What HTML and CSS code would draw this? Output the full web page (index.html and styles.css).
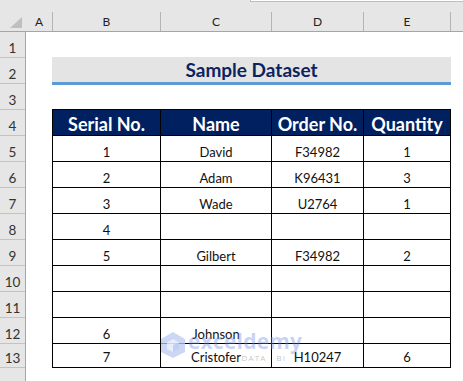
FILE: index.html
```html
<!DOCTYPE html>
<html>
<head>
<meta charset="utf-8">
<link rel="stylesheet" href="styles.css">
</head>
<body>
<div class="app">
  <div class="topstrip"><div class="fx"></div></div>
  <div class="colhdr">
    <div class="corner"><svg width="13" height="12" viewBox="0 0 13 12"><polygon points="12,0 12,11 0,11" fill="#bfbfbf"/></svg></div>
    <div class="ch w-a">A</div>
    <div class="ch w-b">B</div>
    <div class="ch w-c">C</div>
    <div class="ch w-d">D</div>
    <div class="ch w-e">E</div>
  </div>
  <div class="body">
    <div class="rowhdr">
      <div class="rn">1</div>
      <div class="rn">2</div>
      <div class="rn">3</div>
      <div class="rn">4</div>
      <div class="rn">5</div>
      <div class="rn">6</div>
      <div class="rn">7</div>
      <div class="rn">8</div>
      <div class="rn">9</div>
      <div class="rn">10</div>
      <div class="rn">11</div>
      <div class="rn">12</div>
      <div class="rn short">13</div>
      <div class="rn last"></div>
    </div>
    <div class="sheet">
      <div class="sp1"></div>
      <div class="title">Sample Dataset</div>
      <div class="sp3"></div>
      <div class="tbl">
        <div class="h">Serial No.</div><div class="h">Name</div><div class="h">Order No.</div><div class="h">Quantity</div>
        <div>1</div><div>David</div><div>F34982</div><div>1</div>
        <div>2</div><div>Adam</div><div>K96431</div><div>3</div>
        <div>3</div><div>Wade</div><div>U2764</div><div>1</div>
        <div>4</div><div></div><div></div><div></div>
        <div>5</div><div>Gilbert</div><div>F34982</div><div>2</div>
        <div></div><div></div><div></div><div></div>
        <div></div><div></div><div></div><div></div>
        <div>6</div><div>Johnson</div><div></div><div></div>
        <div class="lr">7</div><div class="lr">Cristofer</div><div class="lr">H10247</div><div class="lr">6</div>
      </div>
    </div>
  </div>
  <div class="wm">
    <svg class="wm-logo" width="28" height="28" viewBox="0 0 28 28">
      <polygon points="14,1 26,8 26,21 14,27 2,21 2,8" fill="#b9c9f0" fill-opacity="0.75"/>
      <polygon points="14,8 20,11.5 20,18 14,21 8,18 8,11.5" fill="#ffffff" fill-opacity="0.55"/>
      <polygon points="14,14 20,11.5 20,18 14,21" fill="#a9bcec" fill-opacity="0.6"/>
    </svg>
    <div class="wm-text">
      <div class="wm-name">exceldemy</div>
      <div class="wm-sub">DATA · BI</div>
    </div>
  </div>
</div>
</body>
</html>
```
FILE: styles.css
```css
* { box-sizing: border-box; margin: 0; padding: 0; }
html, body { background: #fff; }
body {
  width: 463px;
  height: 381px;
  overflow: hidden;
  font-family: Lato, "Liberation Sans", sans-serif;
}
.app {
  position: relative;
  width: 463px;
  height: 381px;
  overflow: hidden;
}
.topstrip {
  height: 12px;
  background: #e6e6e6;
  display: flex;
}
.fx {
  margin-left: 250px;
  flex: 1;
  height: 2px;
  background: #fff;
  border-bottom: 1px solid #bdbdbd;
  border-left: 1px solid #bdbdbd;
}
.colhdr {
  display: flex;
  height: 20px;
  background: #e6e6e6;
  border-bottom: 1px solid #a6a6a6;
}
.corner {
  width: 26px;
  position: relative;
}
.corner svg {
  position: absolute;
  left: 10px;
  top: 5px;
}
.ch {
  display: flex;
  align-items: center;
  justify-content: center;
  border-right: 1px solid #b4b4b4;
  font-size: 12px;
  line-height: 16px;
  color: #222;
  padding-top: 1px;
}
.w-a { width: 27px; }
.w-b { width: 108px; }
.w-c { width: 111px; }
.w-d { width: 92px; }
.w-e { width: 87px; }
.body {
  display: flex;
}
.rowhdr {
  width: 26px;
  height: 349px;
  background: #e6e6e6;
  border-right: 1px solid #a6a6a6;
  display: flex;
  flex-direction: column;
}
.rn {
  height: 26px;
  flex: none;
  border-bottom: 1px solid #c3c3c3;
  display: flex;
  align-items: flex-end;
  justify-content: center;
  font-size: 13.5px;
  line-height: 16px;
  padding-bottom: 1px;
  color: #333;
}
.rn.short { height: 24px; }
.rn.last { flex: 1; border-bottom: none; }
.sheet {
  margin-left: 26px;
  display: flex;
  flex-direction: column;
}
.sp1 { height: 25px; }
.sp3 { height: 24px; }
.title {
  width: 399px;
  height: 28px;
  background: #e4e4e4;
  border-bottom: 3px solid #5b9bd5;
  display: flex;
  align-items: flex-end;
  justify-content: center;
  font-weight: 700;
  font-size: 19px;
  line-height: 20px;
  padding-bottom: 2px;
  color: #0b2461;
}
.tbl {
  display: grid;
  grid-template-columns: 107px 110px 91px 86px;
  grid-template-rows: repeat(9, 25px) 23px;
  gap: 1px;
  background: #000;
  border: 1px solid #000;
  width: 399px;
}
.tbl > div {
  background: #fff;
  display: flex;
  align-items: flex-end;
  justify-content: center;
  font-size: 13px;
  line-height: 16px;
  padding-bottom: 1px;
  color: #111;
}
.tbl > .h {
  background: #002060;
  color: #fff;
  font-weight: 700;
  font-size: 18px;
  line-height: 20px;
  padding-bottom: 1px;
}
.tbl > .lr { padding-bottom: 2px; }
.wm {
  position: absolute;
  left: 159px;
  top: 331px;
  display: flex;
  align-items: flex-start;
  gap: 1px;
  pointer-events: none;
}
.wm-text {
  display: flex;
  flex-direction: column;
  align-items: flex-end;
}
.wm-name {
  font-family: "Open Sans", Lato, sans-serif;
  font-weight: 700;
  font-size: 21px;
  line-height: 20px;
  color: rgba(110, 140, 225, 0.38);
  letter-spacing: 0.2px;
}
.wm-sub {
  font-family: "Open Sans", Lato, sans-serif;
  font-size: 8px;
  line-height: 10px;
  letter-spacing: 1.2px;
  color: rgba(120, 120, 120, 0.45);
  margin-right: 16px;
  margin-top: 2px;
}
```
